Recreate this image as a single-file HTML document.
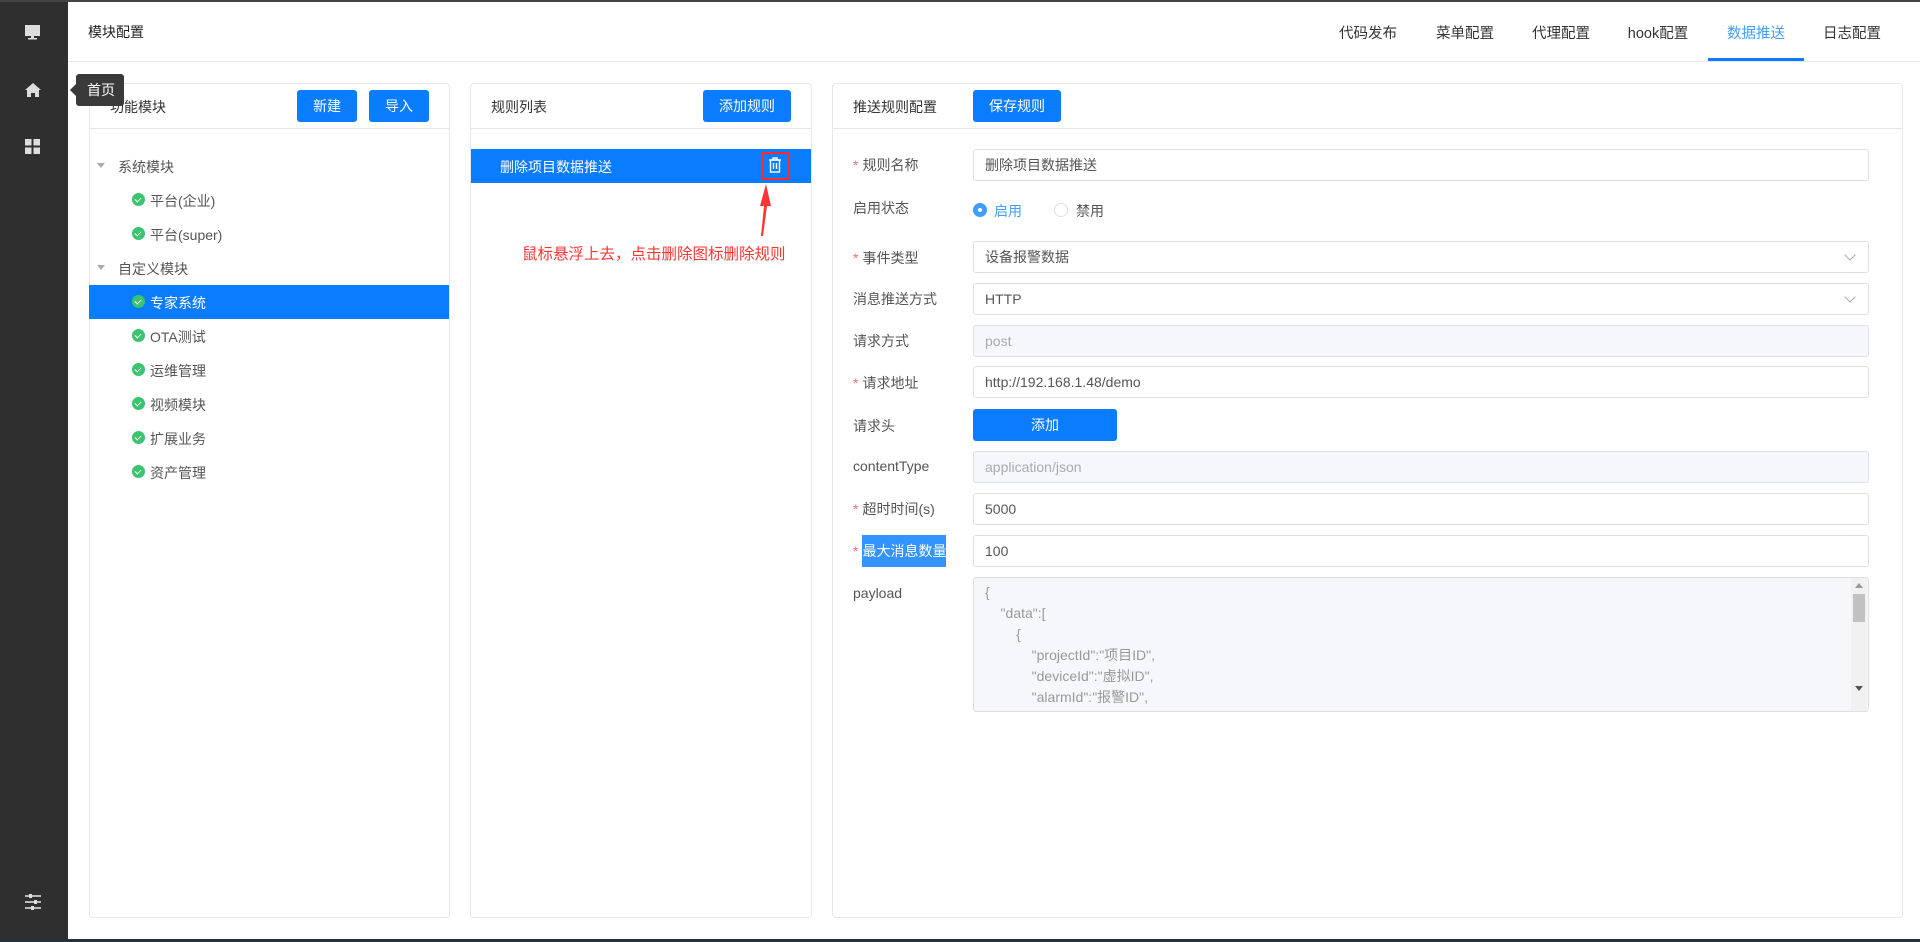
<!DOCTYPE html>
<html><head><meta charset="utf-8"><style>
*{box-sizing:border-box;margin:0;padding:0}
body{width:1920px;height:942px;position:relative;overflow:hidden;background:#fff;font-family:"Liberation Sans","Noto Sans CJK SC",sans-serif;font-size:14px;color:#333}
.a{position:absolute}
.side{left:0;top:0;width:68px;height:942px;background:#2f2f2f}
.topline{left:0;top:0;width:1920px;height:2px;background:#444}
.bot{left:0;top:939px;width:1920px;height:3px;background:#263238}
.panel{border:1px solid #e4e7ed;border-radius:4px;background:#fff}
.btn{background:#0a7cff;color:#fff;border-radius:3px;text-align:center;line-height:32px;font-size:14px}
.tab{top:22px;font-size:14.5px;color:#333;transform:translateX(-50%);white-space:nowrap}
.lbl{left:853px;font-size:14px;color:#555}
.lbl i{color:#f56c6c;font-style:normal;margin-right:4px}
.inp{left:973px;width:896px;height:32px;border:1px solid #dcdfe6;border-radius:3px;padding-left:11px;line-height:30px;font-size:14px;color:#555}
.dis{background:#f5f7fa;color:#a8abb2}
.ck{width:13px;height:13px;border-radius:50%;background:#3bc46f}
.ck:after{content:"";position:absolute;left:4px;top:2.5px;width:3px;height:5px;border:solid #fff;border-width:0 1.5px 1.5px 0;transform:rotate(45deg)}
.tr{font-size:14px;color:#555}
.chev{right:14px;top:9px;width:8px;height:8px;border:solid #aaa;border-width:0 1px 1px 0;transform:rotate(45deg)}
</style></head><body>
<div class="a side"></div>
<div class="a topline"></div>
<svg class="a" style="left:24px;top:24px" width="18" height="17" viewBox="0 0 18 17"><rect x="1" y="1" width="15" height="11" fill="#ddd"/><rect x="7" y="12" width="3" height="2" fill="#ddd"/><rect x="4" y="14" width="9" height="1.5" fill="#ddd"/></svg>
<svg class="a" style="left:24px;top:82px" width="18" height="16" viewBox="0 0 18 16"><path d="M9 1L1 8h2v7h4v-4h4v4h4V8h2z" fill="#ddd"/></svg>
<svg class="a" style="left:25px;top:139px" width="16" height="16" viewBox="0 0 16 16"><rect x="0" y="0" width="6.5" height="6.5" fill="#ddd"/><rect x="8.5" y="0" width="6.5" height="6.5" fill="#ddd"/><rect x="0" y="8.5" width="6.5" height="6.5" fill="#ddd"/><rect x="8.5" y="8.5" width="6.5" height="6.5" fill="#ddd"/></svg>
<svg class="a" style="left:24px;top:894px" width="18" height="16" viewBox="0 0 18 16"><g stroke="#ddd" stroke-width="1.6"><line x1="1" y1="2" x2="17" y2="2"/><line x1="1" y1="8" x2="17" y2="8"/><line x1="1" y1="14" x2="17" y2="14"/></g><g fill="#ddd"><rect x="5" y="0" width="3" height="4"/><rect x="10" y="6" width="3" height="4"/><rect x="7" y="12" width="3" height="4"/></g></svg>
<div class="a" style="left:88px;top:22px;font-size:14px;color:#222">模块配置</div>
<div class="a" style="left:68px;top:61px;width:1852px;height:1px;background:#e4e7ed"></div>
<div class="a tab" style="left:1368px">代码发布</div>
<div class="a tab" style="left:1465px">菜单配置</div>
<div class="a tab" style="left:1561px">代理配置</div>
<div class="a tab" style="left:1658px">hook配置</div>
<div class="a tab" style="left:1756px;color:#409eff">数据推送</div>
<div class="a tab" style="left:1852px">日志配置</div>
<div class="a" style="left:1708px;top:58px;width:96px;height:3px;background:#0a7cff"></div>
<div class="a panel" style="left:89px;top:83px;width:361px;height:835px"></div>
<div class="a" style="left:89px;top:128px;width:361px;height:1px;background:#e4e7ed"></div>
<div class="a" style="left:110px;top:97px;color:#333">功能模块</div>
<div class="a btn" style="left:297px;top:90px;width:60px">新建</div>
<div class="a btn" style="left:369px;top:90px;width:60px">导入</div>
<div class="a" style="left:89px;top:285px;width:360px;height:34px;background:#0a7cff"></div>
<div class="a" style="left:97px;top:163px;border:4px solid transparent;border-top:5px solid #aaa"></div>
<div class="a tr" style="left:118px;top:157px">系统模块</div>
<div class="a" style="left:97px;top:265px;border:4px solid transparent;border-top:5px solid #aaa"></div>
<div class="a tr" style="left:118px;top:259px">自定义模块</div>
<div class="a ck" style="left:132px;top:193px"></div><div class="a tr" style="left:150px;top:191px">平台(企业)</div>
<div class="a ck" style="left:132px;top:227px"></div><div class="a tr" style="left:150px;top:225px">平台(super)</div>
<div class="a ck" style="left:132px;top:295px"></div><div class="a tr" style="left:150px;top:293px;color:#fff">专家系统</div>
<div class="a ck" style="left:132px;top:329px"></div><div class="a tr" style="left:150px;top:327px">OTA测试</div>
<div class="a ck" style="left:132px;top:363px"></div><div class="a tr" style="left:150px;top:361px">运维管理</div>
<div class="a ck" style="left:132px;top:397px"></div><div class="a tr" style="left:150px;top:395px">视频模块</div>
<div class="a ck" style="left:132px;top:431px"></div><div class="a tr" style="left:150px;top:429px">扩展业务</div>
<div class="a ck" style="left:132px;top:465px"></div><div class="a tr" style="left:150px;top:463px">资产管理</div>
<div class="a" style="left:76px;top:74px;width:48px;height:32px;background:#3a3a3a;border-radius:3px;color:#fff;font-size:14px;line-height:32px;padding-left:11px">首页</div>
<div class="a" style="left:70px;top:84px;border:6px solid transparent;border-right:6px solid #3a3a3a;border-left:0"></div>
<div class="a panel" style="left:470px;top:83px;width:342px;height:835px"></div>
<div class="a" style="left:470px;top:128px;width:342px;height:1px;background:#e4e7ed"></div>
<div class="a" style="left:491px;top:97px">规则列表</div>
<div class="a btn" style="left:703px;top:90px;width:88px">添加规则</div>
<div class="a" style="left:471px;top:149px;width:340px;height:34px;background:#0a7cff"></div>
<div class="a" style="left:500px;top:157px;color:#fff">删除项目数据推送</div>
<div class="a" style="left:762px;top:152px;width:28px;height:28px;border:2px solid #ff2b2b"></div>
<svg class="a" style="left:768px;top:157px" width="14" height="16" viewBox="0 0 14 16"><g stroke="#fff" stroke-width="1.4" fill="none"><line x1="1" y1="3" x2="13" y2="3"/><path d="M5 3V1h4v2"/><rect x="2.5" y="3" width="9" height="12"/><line x1="5.5" y1="6" x2="5.5" y2="12"/><line x1="8.5" y1="6" x2="8.5" y2="12"/></g></svg>
<svg class="a" style="left:752px;top:182px" width="24" height="56" viewBox="0 0 24 56"><path d="M14 2L8 24h4L9 54h2L15 24h4z" fill="#ff3535"/></svg>
<div class="a" style="left:522px;top:242px;color:#ff3535;font-size:15.5px">鼠标悬浮上去，点击删除图标删除规则</div>
<div class="a panel" style="left:832px;top:83px;width:1071px;height:835px"></div>
<div class="a" style="left:832px;top:128px;width:1071px;height:1px;background:#e4e7ed"></div>
<div class="a" style="left:853px;top:97px">推送规则配置</div>
<div class="a btn" style="left:973px;top:90px;width:88px">保存规则</div>
<div class="a lbl" style="top:155px"><i>*</i>规则名称</div>
<div class="a inp" style="top:149px">删除项目数据推送</div>
<div class="a lbl" style="top:198px">启用状态</div>
<div class="a" style="left:973px;top:203px;width:14px;height:14px;border-radius:50%;background:#409eff"></div>
<div class="a" style="left:978px;top:208px;width:4px;height:4px;border-radius:50%;background:#fff"></div>
<div class="a" style="left:994px;top:201px;color:#409eff">启用</div>
<div class="a" style="left:1054px;top:203px;width:14px;height:14px;border-radius:50%;border:1px solid #dcdfe6"></div>
<div class="a" style="left:1076px;top:201px;color:#555">禁用</div>
<div class="a lbl" style="top:248px"><i>*</i>事件类型</div>
<div class="a inp" style="top:241px">设备报警数据<div class="a chev"></div></div>
<div class="a lbl" style="top:289px">消息推送方式</div>
<div class="a inp" style="top:283px">HTTP<div class="a chev"></div></div>
<div class="a lbl" style="top:331px">请求方式</div>
<div class="a inp dis" style="top:325px">post</div>
<div class="a lbl" style="top:373px"><i>*</i>请求地址</div>
<div class="a inp" style="top:366px">http://192.168.1.48/demo</div>
<div class="a lbl" style="top:416px">请求头</div>
<div class="a btn" style="left:973px;top:409px;width:144px">添加</div>
<div class="a lbl" style="top:458px">contentType</div>
<div class="a inp dis" style="top:451px">application/json</div>
<div class="a lbl" style="top:499px"><i>*</i>超时时间(s)</div>
<div class="a inp" style="top:493px">5000</div>
<div class="a lbl" style="top:541px"><i>*</i><span style="background:#3393ff;color:#fff;padding:8px 0">最大消息数量</span></div>
<div class="a inp" style="top:535px">100</div>
<div class="a lbl" style="top:585px">payload</div>
<div class="a inp dis" style="top:577px;height:135px;line-height:21px;padding-top:4px;color:#999;white-space:pre">{
    "data":[
        {
            "projectId":"项目ID",
            "deviceId":"虚拟ID",
            "alarmId":"报警ID",</div>
<div class="a" style="left:1851px;top:578px;width:16px;height:133px;background:#f1f1f1"></div>
<div class="a" style="left:1853px;top:594px;width:12px;height:28px;background:#c1c1c1"></div>
<div class="a" style="left:1855px;top:583px;border:4px solid transparent;border-bottom:5px solid #999;border-top:0"></div>
<div class="a" style="left:1855px;top:686px;border:4px solid transparent;border-top:5px solid #555;border-bottom:0"></div>
<div class="a bot"></div>
</body></html>
